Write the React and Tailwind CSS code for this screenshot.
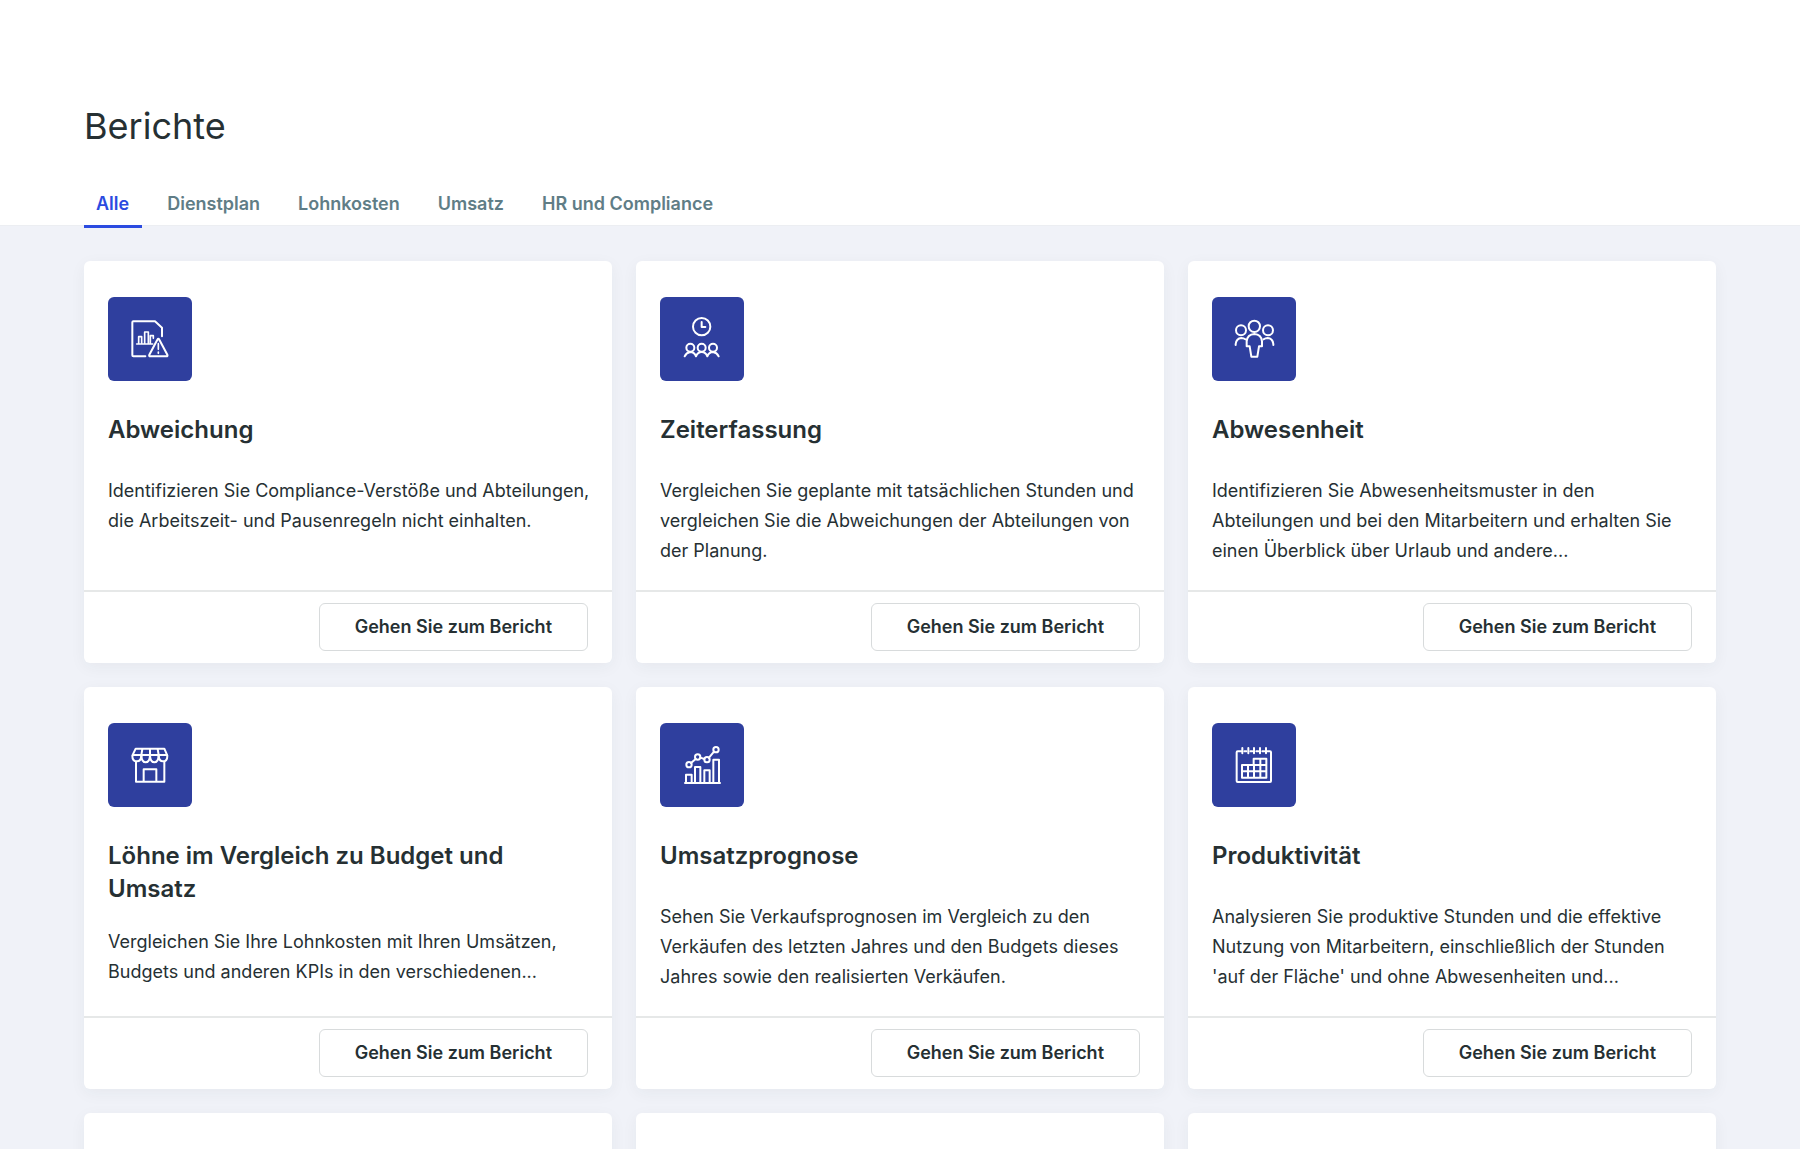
// src/pages/ReportsPage.jsx
import React, { useState } from "react";

const tabs = ["Alle", "Dienstplan", "Lohnkosten", "Umsatz", "HR und Compliance"];

const VarianceIcon = () => (
  <>
    <path d="M112 178H76q-3 0-3-3V76q0-3 3-3h65l21 19v26" />
    <path d="M86 141h48M92 140v-21h9v21M110 140v-35h11v35M121 140v-24M127 138v-22h9v8" strokeWidth="5" />
    <path d="M148 128q3-5 6 0l24 45q2 5-3 5h-48q-5 0-3-5z" />
    <path d="M151 140v17M151 165v4" strokeWidth="5" />
  </>
);

const TimeIcon = () => (
  <>
    <circle cx="125" cy="89" r="26" />
    <path d="M125 75v15h11" />
    <circle cx="91" cy="152" r="12" />
    <circle cx="125" cy="152" r="12" />
    <circle cx="159" cy="152" r="12" />
    <path d="M74 178q5-11 17-13q12 0 17 13q5-13 17-13q12 0 17 13q5-13 17-13q12 2 17 13" />
  </>
);

const AbsenceIcon = () => (
  <>
    <circle cx="127" cy="88" r="17" />
    <circle cx="87" cy="100" r="15" />
    <circle cx="168" cy="100" r="15" />
    <path d="M71 144v-3q2-17 17-18q7 0 12 4M184 144v-3q-2-17-17-18q-7 0-12 4" />
    <path d="M104 148v-15q2-21 23-22q21 1 23 22v15h-9l-5 31h-18l-5-31z" />
  </>
);

const StoreIcon = () => (
  <>
    <path d="M83 77h86l9 21q0 17-13 17q-12 0-13-17q-1 20-13 20t-13-20q-1 20-13 20t-13-20q-1 17-13 17q-14 0-14-17z" />
    <path d="M76 96h101M103 78l-3 18v6M126 78v24M149 78l3 18v6" />
    <path d="M84 116v60h85v-60M107 175v-36h38v36" />
  </>
);

const ForecastIcon = () => (
  <>
    <path d="M75 180h105" />
    <path d="M78 179v-24h17v24M105 179v-47h16v47M133 179v-37h16v37M160 179v-69h17v69" />
    <circle cx="87" cy="125" r="8" />
    <circle cx="113" cy="102" r="8" />
    <circle cx="141" cy="110" r="8" />
    <circle cx="168" cy="80" r="8" />
    <path d="M93 120l14-12M121 104l12 4M147 104l15-18" />
  </>
);

const ProductivityIcon = () => (
  <>
    <path d="M88 85H77q-3 0-3 3v86q0 3 3 3h97q3 0 3-3V88q0-3-3-3h-8M97 85h6M115 85h6M133 85h6M151 85h6" />
    <path d="M91 75v16M109 75v16M126 75v16M144 75v16M162 75v16" />
    <path d="M90 126h35v-19h38v57H90zM90 145h73M125 126h38M108 126v38M126 126v38M145 107v57" />
  </>
);

const reports = [
  {
    title: "Abweichung",
    icon: VarianceIcon,
    text: "Identifizieren Sie Compliance-Verstöße und Abteilungen, die Arbeitszeit- und Pausenregeln nicht einhalten.",
  },
  {
    title: "Zeiterfassung",
    icon: TimeIcon,
    text: "Vergleichen Sie geplante mit tatsächlichen Stunden und vergleichen Sie die Abweichungen der Abteilungen von der Planung.",
  },
  {
    title: "Abwesenheit",
    icon: AbsenceIcon,
    text: "Identifizieren Sie Abwesenheitsmuster in den Abteilungen und bei den Mitarbeitern und erhalten Sie einen Überblick über Urlaub und andere...",
  },
  {
    title: "Löhne im Vergleich zu Budget und Umsatz",
    icon: StoreIcon,
    text: "Vergleichen Sie Ihre Lohnkosten mit Ihren Umsätzen, Budgets und anderen KPIs in den verschiedenen...",
  },
  {
    title: "Umsatzprognose",
    icon: ForecastIcon,
    text: "Sehen Sie Verkaufsprognosen im Vergleich zu den Verkäufen des letzten Jahres und den Budgets dieses Jahres sowie den realisierten Verkäufen.",
  },
  {
    title: "Produktivität",
    icon: ProductivityIcon,
    text: "Analysieren Sie produktive Stunden und die effektive Nutzung von Mitarbeitern, einschließlich der Stunden 'auf der Fläche' und ohne Abwesenheiten und...",
  },
];

const cardClass = "flex flex-col rounded-md bg-white shadow-[0_4px_16px_rgba(40,50,60,0.05)]";

const ReportCard = ({ report }) => {
  const Icon = report.icon;

  return (
    <article className={cardClass}>
      <div className="flex-1 pt-9 pr-5 pb-6 pl-6">
        <div className="size-21 rounded-md bg-[#2f3f9e]">
          <svg
            viewBox="0 0 252 252"
            className="size-full"
            fill="none"
            stroke="white"
            strokeWidth="6"
            strokeLinecap="round"
            strokeLinejoin="round"
            aria-hidden="true"
          >
            <Icon />
          </svg>
        </div>
        <h2 className="mt-8 mb-[22px] min-h-[41px] text-2xl leading-[33px] font-semibold">{report.title}</h2>
        <p className="text-lg leading-[30px]">{report.text}</p>
      </div>
      <div className="flex justify-end border-t-2 border-[#e6e8e8] px-6 pt-[11px] pb-3">
        <button
          type="button"
          className="h-12 rounded-md border border-[#d8dbdc] bg-white px-[35px] text-lg leading-6 font-semibold"
        >
          Gehen Sie zum Bericht
        </button>
      </div>
    </article>
  );
};

const ReportsPage = () => {
  const [activeTab, setActiveTab] = useState("Alle");

  return (
    <div className="h-screen overflow-y-auto bg-[#f0f2f8] font-['Inter',sans-serif] text-[#263033] [scrollbar-width:none]">
      <header className="border-b border-[#eceef2] bg-white px-21 pt-[102px]">
        <h1 className="text-4xl leading-12 font-normal">Berichte</h1>
        <nav className="-mb-[3px] mt-8 flex gap-[13px]">
          {tabs.map((tab) => (
            <button
              key={tab}
              type="button"
              onClick={() => setActiveTab(tab)}
              className={`border-b-3 pt-[10px] pr-[13px] pb-[9px] pl-3 text-lg leading-6 font-semibold ${
                activeTab === tab
                  ? "border-[#2b4be0] text-[#2b4be0]"
                  : "border-transparent text-[#607d86]"
              }`}
            >
              {tab}
            </button>
          ))}
        </nav>
      </header>

      <main className="grid auto-rows-fr grid-cols-3 gap-6 px-21 pt-[35px] pb-9">
        {reports.map((report) => (
          <ReportCard key={report.title} report={report} />
        ))}
        {/* next row, still empty */}
        <article className={cardClass} />
        <article className={cardClass} />
        <article className={cardClass} />
      </main>
    </div>
  );
};

export default ReportsPage;
